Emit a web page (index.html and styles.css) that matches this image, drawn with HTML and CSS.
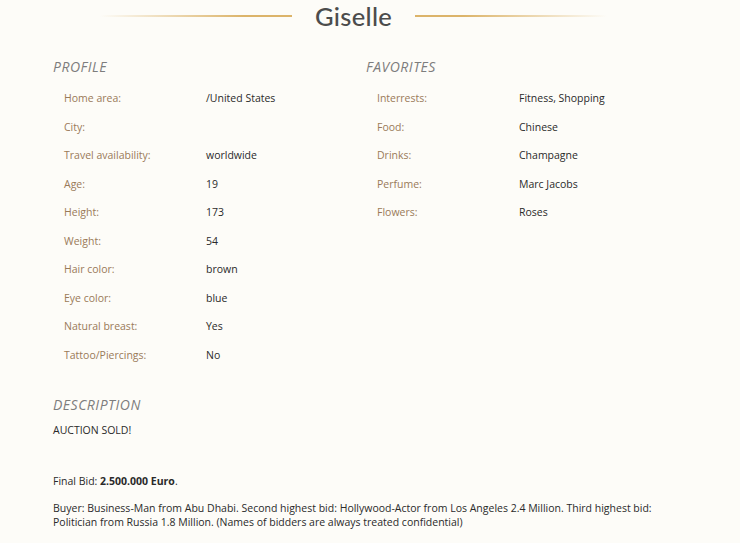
FILE: index.html
```html
<!DOCTYPE html>
<html>
<head>
<meta charset="utf-8">
<link rel="stylesheet" href="styles.css">
</head>
<body>
<div class="page">
  <header class="title-bar">
    <span class="rule rule-left"></span>
    <h1 class="name">Giselle</h1>
    <span class="rule rule-right"></span>
  </header>
  <div class="columns">
    <section class="col col-profile">
      <h2 class="sec-title">PROFILE</h2>
      <div class="rows">
        <div class="row"><span class="lbl">Home area:</span><span class="val">/United States</span></div>
        <div class="row"><span class="lbl">City:</span><span class="val"></span></div>
        <div class="row"><span class="lbl">Travel availability:</span><span class="val">worldwide</span></div>
        <div class="row"><span class="lbl">Age:</span><span class="val">19</span></div>
        <div class="row"><span class="lbl">Height:</span><span class="val">173</span></div>
        <div class="row"><span class="lbl">Weight:</span><span class="val">54</span></div>
        <div class="row"><span class="lbl">Hair color:</span><span class="val">brown</span></div>
        <div class="row"><span class="lbl">Eye color:</span><span class="val">blue</span></div>
        <div class="row"><span class="lbl">Natural breast:</span><span class="val">Yes</span></div>
        <div class="row"><span class="lbl">Tattoo/Piercings:</span><span class="val">No</span></div>
      </div>
    </section>
    <section class="col col-fav">
      <h2 class="sec-title">FAVORITES</h2>
      <div class="rows">
        <div class="row"><span class="lbl">Interrests:</span><span class="val">Fitness, Shopping</span></div>
        <div class="row"><span class="lbl">Food:</span><span class="val">Chinese</span></div>
        <div class="row"><span class="lbl">Drinks:</span><span class="val">Champagne</span></div>
        <div class="row"><span class="lbl">Perfume:</span><span class="val">Marc Jacobs</span></div>
        <div class="row"><span class="lbl">Flowers:</span><span class="val">Roses</span></div>
      </div>
    </section>
  </div>
  <section class="desc">
    <h2 class="sec-title desc-title">DESCRIPTION</h2>
    <p class="txt">AUCTION SOLD!</p>
    <p class="txt">&nbsp;</p>
    <p class="txt txt-bid">Final Bid: <strong>2.500.000 Euro</strong>.</p>
    <p class="txt">Buyer: Business-Man from Abu Dhabi. Second highest bid: Hollywood-Actor from Los Angeles 2.4 Million. Third highest bid: Politician from Russia 1.8 Million. (Names of bidders are always treated confidential)</p>
  </section>
</div>
</body>
</html>
```

FILE: styles.css
```css
html, body {
  margin: 0;
  padding: 0;
  background: #fdfcf8;
}
body {
  font-family: "Open Sans", "Liberation Sans", sans-serif;
  color: #2a2a2a;
  font-size: 10.5px;
}
.page {
  padding: 0 60px 0 53px;
}
.title-bar {
  display: flex;
  align-items: center;
  gap: 23px;
  height: 32px;
  padding-left: 47px;
}
.rule {
  display: block;
  width: 192px;
  height: 2px;
}
.rule-left {
  background: linear-gradient(to right, rgba(220,180,106,0), #dcb46a 75%);
}
.rule-right {
  background: linear-gradient(to left, rgba(220,180,106,0), #dcb46a 75%);
}
.name {
  margin: 0;
  font-weight: 500;
  font-size: 25.5px;
  color: #4c4c4c;
  font-family: "Lato", "Open Sans", sans-serif;
  letter-spacing: 0.3px;
}
.columns {
  display: grid;
  grid-template-columns: 313px 1fr;
  margin-top: 25px;
}
.sec-title {
  margin: 0;
  font-size: 14px;
  font-weight: 400;
  font-style: italic;
  color: #7d7d7d;
  line-height: 20px;
  letter-spacing: 0.5px;
}
.rows {
  margin-top: 7px;
  padding-left: 11px;
}
.row {
  display: flex;
  height: 28.5px;
  align-items: center;
}
.lbl {
  width: 142px;
  color: #9a7a58;
}
.val {
  color: #2a2a2a;
}
.desc {
  margin-top: 26px;
}
.txt {
  margin: 0 0 11.5px;
  line-height: 14px;
}
.txt-bid {
  margin-bottom: 13px;
}
.txt strong {
  font-weight: 700;
}
.desc-title {
  margin-bottom: 8px;
}
```
